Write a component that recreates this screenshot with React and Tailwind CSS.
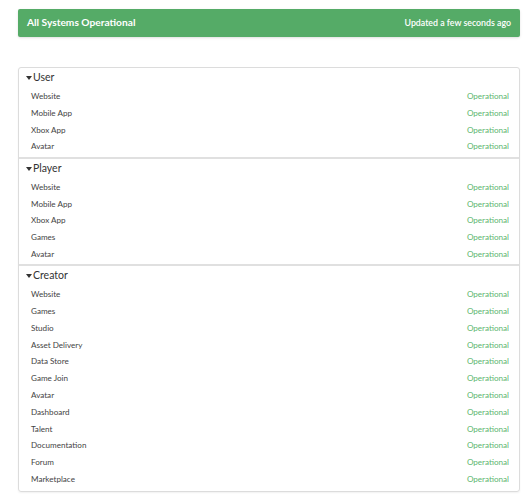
import React from "react";

const groups = [
  { name: "User", items: ["Website", "Mobile App", "Xbox App", "Avatar"] },
  { name: "Player", items: ["Website", "Mobile App", "Xbox App", "Games", "Avatar"] },
  {
    name: "Creator",
    items: [
      "Website",
      "Games",
      "Studio",
      "Asset Delivery",
      "Data Store",
      "Game Join",
      "Avatar",
      "Dashboard",
      "Talent",
      "Documentation",
      "Forum",
      "Marketplace",
    ],
  },
];

function Caret() {
  return (
    <svg width="6" height="4" viewBox="0 0 6 4" className="mr-[1px]">
      <path d="M0 0 L6 0 L3 4 Z" fill="#333" />
    </svg>
  );
}

function Group({ group, last }) {
  return (
    <div className={last ? "pb-[3px]" : "pb-[2px] border-b-2 border-[#e0e0e0]"}>
      <div className="flex items-center h-[19.6px] pl-[7px] text-[10.5px] text-[#333]">
        <Caret />
        <span>{group.name}</span>
      </div>
      {group.items.map((item, i) => (
        <div key={i} className="flex items-center justify-between h-[16.8px] pl-[12px] pr-[10px] text-[8.1px]">
          <span className="text-[#444]">{item}</span>
          <span className="text-[#5cb66f]">Operational</span>
        </div>
      ))}
    </div>
  );
}

export default function App() {
  return (
    <div className="w-[531px] h-[500px] bg-white pt-[9px] pl-[18px] pr-[11px]" style={{ fontFamily: "Lato, 'Open Sans', sans-serif" }}>
      <div className="flex items-center justify-between h-[28px] px-[9px] bg-[#55ab67] rounded-[2px] shadow-sm text-white text-[10.2px] font-bold">
        <span>All Systems Operational</span>
        <span className="font-semibold text-[8.8px]">Updated a few seconds ago</span>
      </div>
      <div className="mt-[30px] border border-[#dcdcdc] rounded-[3px] shadow-[0_1px_2px_rgba(0,0,0,0.06)]">
        {groups.map((g, i) => (
          <Group key={g.name} group={g} last={i === groups.length - 1} />
        ))}
      </div>
    </div>
  );
}
